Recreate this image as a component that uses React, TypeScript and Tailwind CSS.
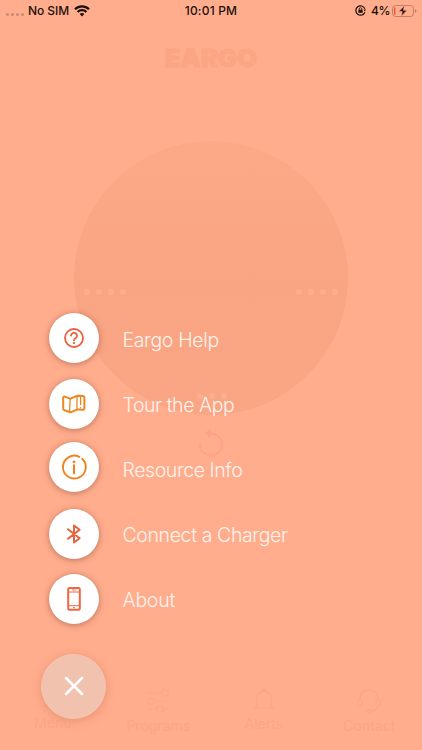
import type { ReactNode } from 'react';

const BG = 'bg-[#ffad8d]';

function StatusBar() {
  return (
    <header className="flex h-5 items-center justify-between pt-px text-xs font-medium text-[#1c100c]">
      <div className="flex w-36 items-center pl-[6px]">
        <div className="mt-[7px] flex gap-[2px]">
          {[0, 1, 2, 3].map((n) => (
            <span key={n} className="h-[3px] w-[3px] rounded-full bg-[#c98a73]" />
          ))}
        </div>
        <span className="ml-[4px] w-[43px] whitespace-nowrap text-[12px] tracking-[-0.05px]">No SIM</span>
        <svg className="ml-[3px]" width="16" height="12" viewBox="0 0 16 12" fill="none" stroke="#1c100c" strokeWidth="2.3">
          <path d="M1 4.3a10 10 0 0 1 14 0" />
          <path d="M3.6 7a6.2 6.2 0 0 1 8.8 0" />
          <path d="M5.7 9.1a3.3 3.3 0 0 1 4.6 0L8 11.5Z" fill="#1c100c" stroke="none" />
        </svg>
      </div>
      <span className="whitespace-nowrap text-[12px] tracking-[0.2px]">10:01 PM</span>
      <div className="flex w-36 items-center justify-end pr-[5px]">
        <svg width="11" height="11" viewBox="0 0 11 11" fill="none" stroke="#1c100c">
          <path d="M9.9 7.2A4.7 4.7 0 1 1 9.9 3.8" strokeWidth="1.2" />
          <path d="M8.4 4.6h2.6L9.8 6.5Z" fill="#1c100c" stroke="none" />
          <rect x="3.4" y="4.8" width="4.2" height="3" fill="#1c100c" stroke="none" />
          <path d="M4.2 5V4a1.3 1.3 0 0 1 2.6 0v1" strokeWidth=".8" />
        </svg>
        <span className="ml-[5px] w-[19px] whitespace-nowrap text-[12px] tracking-[-0.3px]">4%</span>
        <svg className="ml-[2px]" width="25" height="12" viewBox="0 0 25 12" fill="none">
          <rect x=".5" y=".5" width="21" height="11" rx="3" stroke="#bd806a" />
          <path d="M23 4v4q1.4-.7 1.4-2T23 4Z" fill="#bd806a" />
          <rect x="2" y="2.2" width="1.3" height="7.6" rx=".6" fill="#f04b3a" />
          <path d="M12.4.8 6.8 6.6h3.5L9.2 11.2l5.9-5.9h-3.7Z" fill="#1c100c" stroke="#ffad8d" strokeWidth=".6" />
        </svg>
      </div>
    </header>
  );
}

function Dots({ count }: { count: number }) {
  return (
    <div className="flex gap-[6px]">
      {Array.from({ length: count }, (_, n) => (
        <span key={n} className="h-[6px] w-[6px] rounded-full bg-[#fcae8d]" />
      ))}
    </div>
  );
}

function Tab({ label, className, children }: { label: string; className: string; children: ReactNode }) {
  return (
    <div className={`flex flex-1 flex-col items-center text-[#fca687] ${className}`}>
      {children}
      <span className="mt-[4px] text-[14px] leading-[18px]">{label}</span>
    </div>
  );
}

function DimmedHome() {
  return (
    <div className="col-start-1 row-start-1 flex flex-col items-center">
      <h1 className="mt-[27px] flex h-[24px] scale-x-[1.08] items-center text-[24px] font-black leading-6 tracking-[-0.2px] text-[#fba584] [-webkit-text-stroke:0.8px_#fba584]">
        EARGO
      </h1>
      <div className="mt-[70px] flex h-[274px] w-[274px] flex-col items-center rounded-full bg-gradient-to-b from-[#fca988] via-[#f9a583] to-[#faa583]">
        <div className="mt-[148px] flex w-full justify-between pl-[10px] pr-[10px]">
          <Dots count={4} />
          <Dots count={4} />
        </div>
        <div className="mt-[98px] pl-[2px]">
          <Dots count={3} />
        </div>
      </div>
      <svg className="mt-[12px]" width="26" height="30" viewBox="0 0 26 30" fill="none" stroke="#fca484" strokeWidth="2">
        <path d="M12 6.5A11 11 0 1 1 2 16" />
        <path d="M13 1v10L7 6Z" fill="#fca484" stroke="none" />
      </svg>
      <nav className="mt-[226px] flex h-[62px] w-full">
        <Tab label="Menu" className="pt-[3px]">
          <svg width="24" height="24" viewBox="0 0 24 24" fill="none" stroke="currentColor" strokeWidth="1">
            <path d="M0 4h24M0 12h24M0 20h24" />
          </svg>
        </Tab>
        <Tab label="Programs" className="pt-[6px]">
          <svg width="26" height="24" viewBox="0 0 26 24" fill="none" stroke="currentColor" strokeWidth="1">
            <path d="M1 4h15M10 12h15M1 20h11M19 20h5" />
            <circle cx="20" cy="4" r="3.5" />
            <circle cx="6" cy="12" r="3.5" />
            <circle cx="15" cy="20" r="3.5" />
          </svg>
        </Tab>
        <Tab label="Alerts" className="pt-[4px]">
          <svg width="24" height="24" viewBox="0 0 24 24" fill="none" stroke="currentColor" strokeWidth="1.2">
            <path d="M3 21h18l-2-4V11a7 7 0 0 0-14 0v6l-2 4ZM10 4a2 2 0 0 1 4 0" />
          </svg>
        </Tab>
        <Tab label="Contact" className="pt-[6px]">
          <svg width="26" height="24" viewBox="0 0 26 24" fill="none" stroke="currentColor" strokeWidth="1.2">
            <path d="M4 11C4-3 22-3 22 11M22 17q0 5-8 5" />
            <rect x="2" y="10" width="4" height="7" rx="2" />
            <rect x="20" y="10" width="4" height="7" rx="2" />
            <circle cx="13" cy="22" r="1.6" />
          </svg>
        </Tab>
      </nav>
    </div>
  );
}

const HelpIcon = (
  <svg width="20" height="20" viewBox="0 0 20 20" fill="none" stroke="#ea6240" strokeWidth="1.8" strokeLinecap="round">
    <circle cx="10" cy="10" r="9" />
    <path d="M7 7.6a3 2.9 0 1 1 4.8 2.4Q10 11.2 10 12.4" />
    <circle cx="10" cy="15.2" r="1.1" fill="#ea6240" stroke="none" />
  </svg>
);

const MapIcon = (
  <svg width="24" height="20" viewBox="0 0 24 20" fill="none" stroke="#ed871f" strokeWidth="2" strokeLinejoin="round" strokeLinecap="round">
    <path d="M1.2 4.1Q1.2 2.4 2.8 2.6L8.2 4.6 15.4 1.7 21 2Q22.4 2.2 22.4 3.8V14.4Q22.4 15.8 21 15.8L15.6 15.4 8.6 18.4 2.4 16.2Q1.2 15.8 1.2 14.6Z" />
    <path d="M8.2 4.9L7.6 17.4M15 2V14.8M18.6 2.6V10.6M18.4 13.6V13.8" strokeWidth="1.3" />
  </svg>
);

const InfoIcon = (
  <svg width="26" height="26" viewBox="0 0 26 26" fill="none" stroke="#ed8420" strokeWidth="1.9" strokeLinecap="round">
    <path d="M21.2 4.8A11.4 11.4 0 1 1 18.3 2.8" />
    <path d="M13 11.4V19.2" strokeWidth="2.1" />
    <circle cx="13" cy="7.9" r="1.4" fill="#ed8420" stroke="none" />
  </svg>
);

const BluetoothIcon = (
  <svg width="14" height="20" viewBox="0 0 14 20" fill="none" stroke="#e8623d" strokeWidth="2" strokeLinejoin="round" strokeLinecap="round">
    <path d="M1 5.2 12.6 14.2 7 18.5V1.5L12.6 5.8 1 14.8" />
  </svg>
);

const PhoneIcon = (
  <svg width="14" height="24" viewBox="0 0 14 24" fill="none" stroke="#ee6841">
    <rect x="1.2" y="1" width="11.6" height="21.8" rx="1.2" strokeWidth="2" />
    <path d="M1.5 5h11M1.5 18.7h11" strokeWidth="1" />
    <path d="M5.2 3h3.6M6.2 20.6h1.6" strokeWidth="1.2" />
  </svg>
);

const ITEMS = [
  { label: 'Eargo Help', icon: HelpIcon, shift: '-mt-px', tracking: 'tracking-[-0.35px]' },
  { label: 'Tour the App', icon: MapIcon, shift: '', tracking: 'tracking-[-0.44px]' },
  { label: 'Resource Info', icon: InfoIcon, shift: '-mt-[4px]', tracking: 'tracking-[-0.42px]' },
  { label: 'Connect a Charger', icon: BluetoothIcon, shift: '-mt-px', tracking: 'tracking-[-0.38px]' },
  { label: 'About', icon: PhoneIcon, shift: '', tracking: 'tracking-[-0.25px]' },
];

function MenuOverlay() {
  return (
    <div className="relative col-start-1 row-start-1 flex flex-col items-start pt-[286px]">
      <ul className="flex flex-col">
        {ITEMS.map(({ label, icon, shift, tracking }) => (
          <li key={label} className="flex h-[65.2px] items-center pl-[48.5px]">
            <span
              className={`flex h-[50px] w-[50px] items-center justify-center rounded-full bg-white shadow-[0_1px_6px_rgba(120,60,35,0.5)] ${shift}`}
            >
              {icon}
            </span>
            <span className={`ml-[24px] mt-[2px] whitespace-nowrap text-[19.5px] font-[360] leading-6 text-[#fff3ec] ${tracking}`}>
              {label}
            </span>
          </li>
        ))}
      </ul>
      <button
        aria-label="Close"
        className="ml-[41px] mt-[22px] flex h-[65px] w-[65px] items-center justify-center rounded-full border border-[#f4c5b0] bg-[#f1c3af] shadow-[0_2px_10px_rgba(200,110,75,0.4)]"
      >
        <svg width="20" height="20" viewBox="0 0 20 20" stroke="#ffffff" strokeWidth="2.5" strokeLinecap="round">
          <path d="M2 2 18 18M18 2 2 18" />
        </svg>
      </button>
    </div>
  );
}

export default function App() {
  return (
    <main className={`flex h-[750px] w-[422px] flex-col overflow-hidden font-['Inter','Liberation_Sans',sans-serif] ${BG}`}>
      <StatusBar />
      <div className="grid flex-1 grid-cols-1">
        <DimmedHome />
        <MenuOverlay />
      </div>
    </main>
  );
}
